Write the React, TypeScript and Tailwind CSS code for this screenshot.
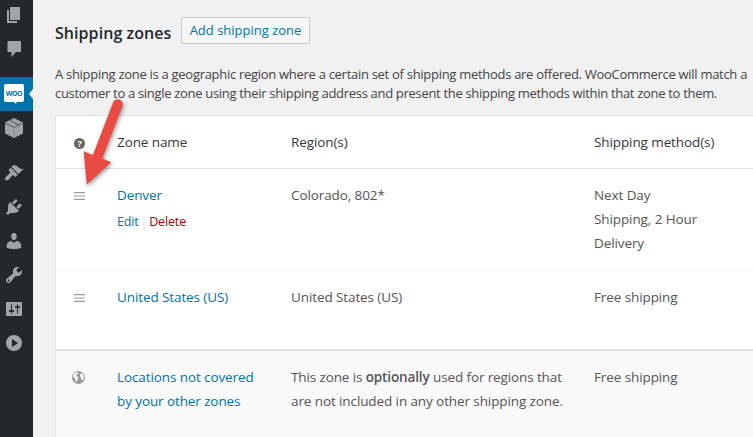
import React from "react";

const paths = {
  page: "M6 15V2h10v13H6zm-1 1h8v2H3V5h2v11z",
  comments: "M5 2h11c.6 0 1 .4 1 1v9c0 .6-.4 1-1 1h-4l-4.500 5v-5H4.500c-.6 0-1-.4-1-1V3c0-.6.500-1 1.500-1z",
  appearance:
    "M14.48 11.06L7.41 3.99l1.5-1.5c.5-.56 2.3-.47 3.51.32 1.21.8 1.43 1.28 2.91 2.1 1.18.64 2.45 1.26 4.45.85zm-.71.71L6.7 4.7 4.93 6.47c-.39.39-.39 1.02 0 1.41l1.06 1.06c.39.39.39 1.03 0 1.42-.6.6-1.43 1.11-2.21 1.69-.35.26-.7.53-1.01.84C1.43 14.23.4 16.08 1.4 17.07c.99 1 2.84-.03 4.18-1.36.31-.31.58-.66.85-1.02.57-.78 1.08-1.61 1.69-2.21.39-.39 1.02-.39 1.41 0l1.06 1.06c.39.39 1.02.39 1.41 0z",
  plugins:
    "M13.11 4.36L9.87 7.6 8 5.73l3.24-3.24c.35-.34 1.05-.2 1.56.32.52.51.66 1.21.31 1.55zm-8 1.77l.91-1.12 9.01 9.01-1.19.84c-.71.71-2.63 1.16-3.82 1.16H6.14L4.9 17.26c-.59.59-1.54.59-2.12 0-.59-.58-.59-1.53 0-2.12l1.24-1.24v-3.88c0-1.13.4-3.19 1.09-3.89zm7.26 3.97l3.24-3.24c.34-.35 1.04-.21 1.55.31.52.51.66 1.21.31 1.55l-3.24 3.25z",
  users:
    "M10 9.25c-2.27 0-2.73-3.44-2.73-3.44C7 4.02 7.82 2 9.97 2c2.16 0 2.98 2.02 2.71 3.81 0 0-.41 3.44-2.68 3.44zm0 2.57L12.72 10c2.39 0 4.52 2.33 4.52 4.53v2.49s-3.65 1.13-7.24 1.13c-3.65 0-7.24-1.13-7.24-1.13v-2.49c0-2.25 1.94-4.48 4.47-4.48z",
  tools:
    "M16.68 9.77c-1.34 1.34-3.3 1.67-4.95.99l-5.41 6.52c-.99.99-2.59.99-3.58 0s-.99-2.59 0-3.57l6.52-5.42c-.68-1.65-.35-3.61.99-4.95 1.28-1.28 3.12-1.62 4.72-1.06l-2.89 2.89 2.82 2.82 2.86-2.87c.53 1.58.18 3.39-1.08 4.65zM3.81 16.21c.4.39 1.04.39 1.43 0 .4-.4.4-1.04 0-1.43-.39-.4-1.03-.4-1.43 0-.39.39-.39 1.03 0 1.43z",
  settings:
    "M18 16V4c0-.55-.45-1-1-1H3c-.55 0-1 .45-1 1v12c0 .55.45 1 1 1h14c.55 0 1-.45 1-1zM8 11h1c.55 0 1 .45 1 1s-.45 1-1 1H8v1.5c0 .28-.22.5-.5.5s-.5-.22-.5-.5V13H6c-.55 0-1-.45-1-1s.45-1 1-1h1V5.5c0-.28.22-.5.5-.5s.5.22.5.5V11zm5-2h-1c-.55 0-1-.45-1-1s.45-1 1-1h1V5.5c0-.28.22-.5.5-.5s.5.22.5.5V7h1c.55 0 1 .45 1 1s-.45 1-1 1h-1v5.5c0 .28-.22.5-.5.5s-.5-.22-.5-.5V9z",
  play: "M10 2a8 8 0 1 0 0 16 8 8 0 0 0 0-16zM8 6l6 4-6 4z",
};

function MenuItem({ icon }: { icon: keyof typeof paths }) {
  return (
    <div className="h-[34px] shrink-0 pl-[4px] pt-[7px]">
      <svg className="size-5" viewBox="0 0 20 20" fill="#a0a5aa" fillRule="evenodd">
        <path d={paths[icon]} />
      </svg>
    </div>
  );
}

function Sidebar() {
  return (
    <aside className="flex w-[33px] shrink-0 flex-col overflow-hidden bg-[#23282d]">
      <div className="-mt-[2px] mb-[11px] shrink-0">
        <MenuItem icon="page" />
        <MenuItem icon="comments" />
      </div>
      <div className="flex h-[34px] shrink-0 items-center justify-between bg-[#0073aa] pl-1">
        <div className="relative -mt-[2px] flex h-[18px] w-5 items-center justify-center rounded-[2px] bg-white">
          <span className="text-[7px] font-bold leading-none tracking-[-0.5px] text-[#0073aa]">WOO</span>
          <svg className="absolute left-[9px] top-[17px] h-[3px] w-[4px]" viewBox="0 0 4 3">
            <path d="M0 0h4L3 3z" fill="#fff" />
          </svg>
        </div>
        <svg className="h-[10px] w-[4px]" viewBox="0 0 4 10">
          <path d="M4 0v10L0 5z" fill="#f1f1f1" />
        </svg>
      </div>
      <div className="mb-[11px] h-[34px] shrink-0 pl-1 pt-[6px]">
        <svg className="h-[22px] w-5" viewBox="0 0 20 22">
          <path d="M10 1l9 4.500v11L10 21l-9-4.500v-11z" fill="#a0a5aa" />
          <path d="M1 6l9 4.500L19 6M6 3.500l9 4.500" fill="none" stroke="#474d53" strokeWidth=".9" />
          <path d="M10 10.500V21" stroke="#7d8287" strokeWidth=".7" />
        </svg>
      </div>
      <MenuItem icon="appearance" />
      <MenuItem icon="plugins" />
      <MenuItem icon="users" />
      <MenuItem icon="tools" />
      <MenuItem icon="settings" />
      <MenuItem icon="play" />
    </aside>
  );
}

function Handle() {
  return (
    <svg className="h-[8px] w-[11px]" viewBox="0 0 11 8" fill="#999">
      <path d="M0 0h11v1.200H0zM0 3.400h11v1.200H0zM0 6.800h11V8H0z" />
    </svg>
  );
}

function Arrow() {
  return (
    <svg className="pointer-events-none absolute left-[76px] top-[92px] h-[104px] w-[56px] overflow-visible drop-shadow-[1px_2px_2px_rgba(0,0,0,0.4)]" viewBox="76 92 56 104">
      <path d="M113.100 102.500a5 5 0 0 1 9.300 3.700L102.300 158.500l8.900 3.700L86.700 184.700 83.700 151.300l9.200 3.700z" fill="#e94b43" />
    </svg>
  );
}

const grid = "grid grid-cols-[61px_174px_303px_1fr]";

export default function App() {
  return (
    <div className="relative flex h-[437px] w-[753px] overflow-hidden bg-[#f1f1f1] font-['Open_Sans',sans-serif] text-[#444]">
      <Sidebar />
      <main className="min-w-0 flex-1 pl-[22px]">
        <header className="flex pt-[17px]">
          <h1 className="w-[126px] whitespace-nowrap pt-[3px] text-[16px] font-semibold leading-[26px] tracking-[0.06px] text-[#23282d]">Shipping zones</h1>
          <button className="flex h-[27px] w-[129px] items-center justify-center whitespace-nowrap rounded-[2px] border border-[#ccc] bg-[#f7f7f7] pt-px text-[13px] font-medium text-[#0073aa]">Add shipping zone</button>
        </header>
        <div className="mt-[19px] h-[50px] whitespace-nowrap text-[13px] leading-[19px]">
          <p className="tracking-[-0.29px]">A shipping zone is a geographic region where a certain set of shipping methods are offered. WooCommerce will match a</p>
          <p className="tracking-[-0.31px]">customer to a single zone using their shipping address and present the shipping methods within that zone to them.</p>
        </div>
        <section className="h-[330px] whitespace-nowrap border border-r-0 border-[#e5e5e5] bg-white text-[13.500px] leading-6 tracking-[-0.1px] text-[#555]">
          <div className={`${grid} h-[53px] border-b border-[#e1e1e1] pt-[14px] text-[#32373c]`}>
            <div className="pl-[18px] pt-[8px]">
              <div className="flex size-[11px] items-center justify-center rounded-full bg-[#666] text-[9px] font-bold leading-none text-white">?</div>
            </div>
            <div>Zone name</div>
            <div>Region(s)</div>
            <div>Shipping method(s)</div>
          </div>
          <div className={`${grid} h-[102px] border-b border-[#f9f9f9] pt-[14px]`}>
            <div className="flex pl-[18px] pt-[9px]"><Handle /></div>
            <div>
              <div className="text-[#0073aa]">Denver</div>
              <div className="flex pt-[3px] text-[12.500px]">
                <span className="tracking-[-0.2px] text-[#0073aa]">Edit</span>
                <span className="px-[2px] text-[#ddd]">|</span>
                <span className="tracking-[-0.15px] text-[#a00]">Delete</span>
              </div>
            </div>
            <div>Colorado, 802*</div>
            <div>Next Day<br />Shipping, 2 Hour<br />Delivery</div>
          </div>
          <div className={`${grid} h-[80px] border-b-2 border-[#e1e1e1] pt-[14px]`}>
            <div className="flex pl-[18px] pt-[9px]"><Handle /></div>
            <div className="text-[#0073aa]">United States (US)</div>
            <div>United States (US)</div>
            <div>Free shipping</div>
          </div>
          <div className={`${grid} h-[93px] bg-[#f9f9f9] pt-[14px]`}>
            <div className="flex pl-[16px] pt-[6px]">
              <svg className="size-[13px]" viewBox="0 0 13 13">
                <circle cx="6.500" cy="6.500" r="6.500" fill="#999" />
                <path d="M3 1.700L5.500 1l1 1-1.500 1.500L4 5l2 1 .5 1.500L5 9.500 4.800 11.500 3.500 9.500 3 7.500 1.300 6 1.300 4zM8 3.500L9.800 2l1.700 2 .5 2.500-1 2.500L9 8.500 9.300 6.500 8 5.500z" fill="#f9f9f9" />
              </svg>
            </div>
            <div className="text-[#0073aa]">Locations not covered<br />by your other zones</div>
            <div><span className="tracking-[-0.12px]">This zone is <b className="font-semibold">optionally</b> used for regions that</span><br />are not included in any other shipping zone.</div>
            <div>Free shipping</div>
          </div>
        </section>
      </main>
      <Arrow />
    </div>
  );
}
